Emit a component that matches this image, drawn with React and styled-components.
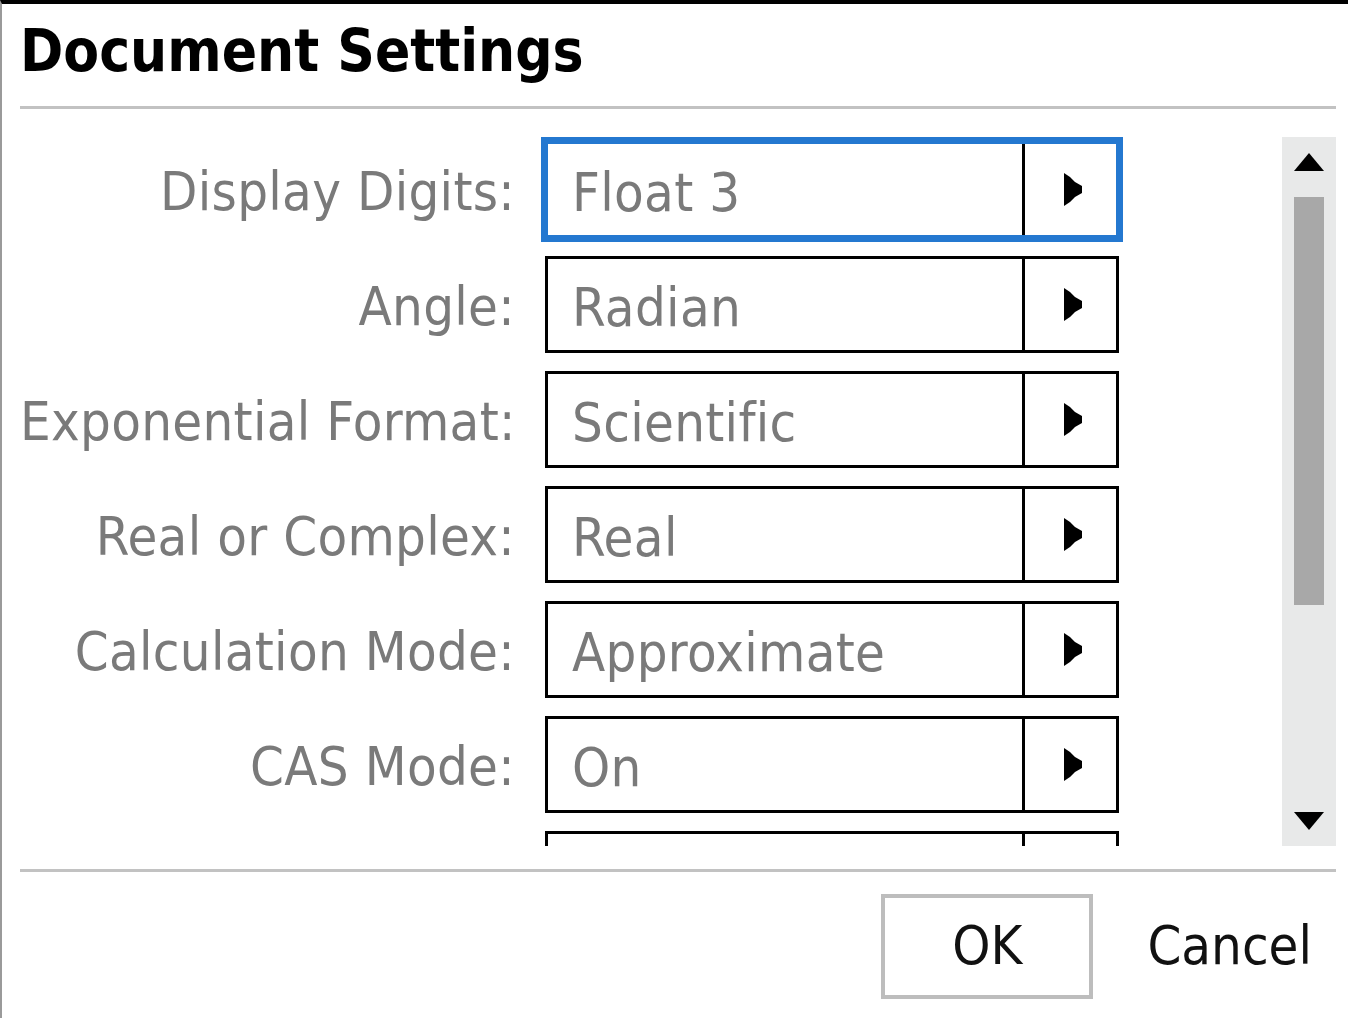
import styled, { createGlobalStyle } from 'styled-components';

const GlobalStyle = createGlobalStyle`
  html, body {
    margin: 0;
    padding: 0;
    background: #fff;
  }
  body {
    font-family: "DejaVu Sans Condensed", "DejaVu Sans", sans-serif;
    font-stretch: semi-condensed;
  }
`;

const Window = styled.div`
  width: 1348px;
  height: 1018px;
  box-sizing: border-box;
  border-top: 4px solid #000;
  border-left: 2px solid #9a9a9a;
  display: flex;
  flex-direction: column;
  overflow: hidden;
  background: #fff;
`;

const Title = styled.h1`
  margin: 0;
  height: 102px;
  box-sizing: border-box;
  padding: 0 0 8px 18px;
  display: flex;
  align-items: center;
  font-size: 58px;
  font-weight: bold;
  color: #000;
`;

const Rule = styled.div`
  height: 3px;
  margin: 0 12px 0 18px;
  background: #c2c2c2;
`;

const Body = styled.div`
  display: flex;
  padding: 28px 12px 0 18px;
  height: 760px;
  box-sizing: border-box;
`;

const List = styled.div`
  flex: 1;
  height: 709px;
  box-sizing: border-box;
  padding-top: 4px;
  overflow: hidden;
`;

const Row = styled.div`
  display: grid;
  grid-template-columns: 495px 574px;
  column-gap: 30px;
  align-items: center;
  height: 97px;
  margin-bottom: 18px;
`;

const Label = styled.div`
  text-align: right;
  font-size: 54px;
  letter-spacing: 0.3px;
  color: #7a7a7a;
  white-space: nowrap;
  padding-top: 3px;
`;

const Field = styled.div`
  display: flex;
  height: 97px;
  box-sizing: border-box;
  border: 3px solid ${(p) => (p.$focused ? '#2478d0' : '#000')};
  box-shadow: ${(p) => (p.$focused ? '0 0 0 4px #2478d0' : 'none')};
  background: #fff;
`;

const Value = styled.div`
  flex: 1;
  display: flex;
  align-items: center;
  padding-left: 24px;
  padding-top: 5px;
  font-size: 54px;
  letter-spacing: 0.3px;
  color: #7a7a7a;
  border-right: 3px solid #000;
`;

const ArrowCell = styled.div`
  width: 91px;
  display: flex;
  align-items: center;
  justify-content: center;
  padding-left: 4px;
  box-sizing: border-box;
`;

const Scrollbar = styled.div`
  width: 54px;
  height: 709px;
  background: #e8e9e9;
  display: flex;
  flex-direction: column;
  align-items: center;
  padding: 16px 0 16px;
  box-sizing: border-box;
`;

const Thumb = styled.div`
  width: 30px;
  height: 408px;
  margin-top: 26px;
  background: #a8a8a8;
`;

const Spacer = styled.div`
  flex: 1;
`;

const Footer = styled.div`
  display: flex;
  justify-content: flex-end;
  align-items: center;
  gap: 54px;
  padding: 22px 36px 0 0;
`;

const OkButton = styled.button`
  width: 212px;
  height: 105px;
  box-sizing: border-box;
  border: 4px solid #bdbdbd;
  background: #fff;
  font-family: inherit;
  font-stretch: inherit;
  font-size: 54px;
  color: #111;
  padding: 0 0 2px;
`;

const TextButton = styled.button`
  border: none;
  background: none;
  padding: 0 0 2px;
  font-family: inherit;
  font-stretch: inherit;
  font-size: 54px;
  color: #111;
`;

const RightArrow = () => (
  <svg width="18" height="33" viewBox="0 0 18 33">
    <polygon points="0,0 6,4 11,9 18,13 18,20 11,24 6,29 0,33" fill="#000" />
  </svg>
);

const UpArrow = () => (
  <svg width="30" height="18" viewBox="0 0 30 18">
    <polygon points="15,0 30,18 0,18" fill="#000" />
  </svg>
);

const DownArrow = () => (
  <svg width="30" height="18" viewBox="0 0 30 18">
    <polygon points="0,0 30,0 15,18" fill="#000" />
  </svg>
);

// the last row is scrolled mostly out of view, only its top edge shows
const settings = [
  { label: 'Display Digits:', value: 'Float 3' },
  { label: 'Angle:', value: 'Radian' },
  { label: 'Exponential Format:', value: 'Scientific' },
  { label: 'Real or Complex:', value: 'Real' },
  { label: 'Calculation Mode:', value: 'Approximate' },
  { label: 'CAS Mode:', value: 'On' },
  { label: '', value: '' },
];

export default function App() {
  return (
    <>
      <GlobalStyle />
      <Window>
        <Title>Document Settings</Title>
        <Rule />
        <Body>
          <List>
            {settings.map((s, i) => (
              <Row key={i}>
                <Label>{s.label}</Label>
                <Field $focused={i === 0}>
                  <Value>{s.value}</Value>
                  <ArrowCell>
                    <RightArrow />
                  </ArrowCell>
                </Field>
              </Row>
            ))}
          </List>
          <Scrollbar>
            <UpArrow />
            <Thumb />
            <Spacer />
            <DownArrow />
          </Scrollbar>
        </Body>
        <Rule />
        <Footer>
          <OkButton>OK</OkButton>
          <TextButton>Cancel</TextButton>
        </Footer>
      </Window>
    </>
  );
}
